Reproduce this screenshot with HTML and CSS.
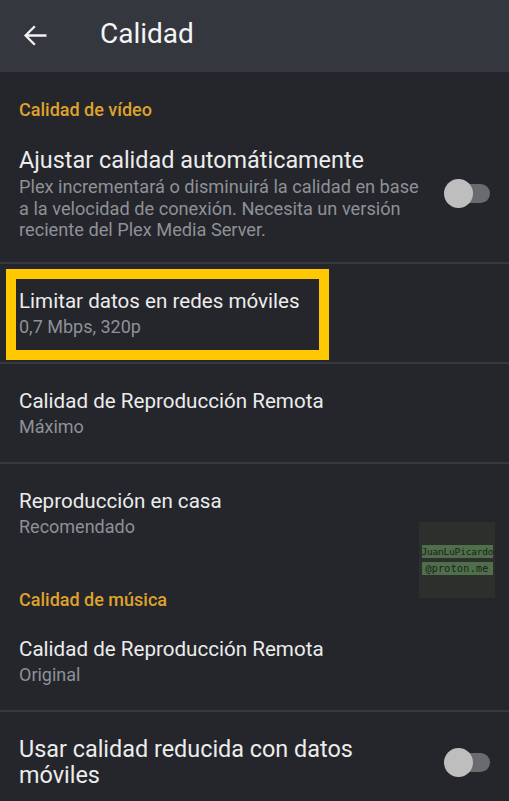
FILE: index.html
```html
<!DOCTYPE html>
<html lang="es">
<head>
<meta charset="utf-8">
<title>Calidad</title>
<link rel="stylesheet" href="styles.css">
</head>
<body>
<header class="appbar">
  <span class="back">
    <svg width="33" height="33" viewBox="0 0 24 24"><path d="M20 12H5.2M11.5 5.3L4.8 12l6.7 6.7" fill="none" stroke="#f2f2f2" stroke-width="1.7"/></svg>
  </span>
  <h1 class="title">Calidad</h1>
</header>
<main class="list">
  <div class="section">Calidad de vídeo</div>
  <div class="item item-toggle first">
    <div class="text">
      <div class="item-title big">Ajustar calidad automáticamente</div>
      <div class="desc">Plex incrementará o disminuirá la calidad en base a la velocidad de conexión. Necesita un versión reciente del Plex Media Server.</div>
    </div>
    <div class="switch"><span class="knob"></span></div>
  </div>
  <div class="item highlight-wrap">
    <div class="highlight"></div>
    <div class="text">
      <div class="item-title">Limitar datos en redes móviles</div>
      <div class="sub">0,7 Mbps, 320p</div>
    </div>
  </div>
  <div class="item">
    <div class="text">
      <div class="item-title">Calidad de Reproducción Remota</div>
      <div class="sub">Máximo</div>
    </div>
  </div>
  <div class="item noline">
    <div class="text">
      <div class="item-title">Reproducción en casa</div>
      <div class="sub">Recomendado</div>
    </div>
  </div>
  <div class="section">Calidad de música</div>
  <div class="item">
    <div class="text">
      <div class="item-title">Calidad de Reproducción Remota</div>
      <div class="sub">Original</div>
    </div>
  </div>
  <div class="item item-toggle noline">
    <div class="text narrow">
      <div class="item-title big">Usar calidad reducida con datos móviles</div>
    </div>
    <div class="switch"><span class="knob"></span></div>
  </div>
  <div class="watermark">
    <span class="wm-label">JuanLuPicardo</span>
    <span class="wm-label wide">@proton.me</span>
  </div>
</main>
</body>
</html>
```
FILE: styles.css
```css
html, body {
  margin: 0;
  padding: 0;
}
body {
  background: #24262b;
  font-family: Roboto, "Noto Sans", "Liberation Sans", sans-serif;
  color: #eeeeee;
  width: 509px;
  height: 801px;
  overflow: hidden;
}
.appbar {
  height: 72px;
  background: #34373e;
  display: flex;
  align-items: center;
  box-sizing: border-box;
  padding-left: 19px;
}
.back {
  display: flex;
  width: 33px;
  height: 33px;
  margin-top: -2px;
}
.title {
  margin: 0 0 0 48px;
  font-size: 28px;
  font-weight: 400;
  color: #f4f4f4;
  line-height: 32px;
  margin-top: -4px;
}
.list {
  position: relative;
}
.section {
  padding: 26px 19px 0;
  line-height: 24px;
  font-size: 18px;
  font-weight: 500;
  color: #dfa22b;
}
.item {
  display: flex;
  align-items: center;
  padding: 24px 19px 22px;
  border-bottom: 2px solid #35383d;
  position: relative;
}
.item.item-toggle {
  padding-bottom: 24px;
}
.item.noline {
  border-bottom: none;
}
.item.first {
  padding-top: 24px;
  padding-bottom: 21px;
}
.text {
  flex: 1;
  min-width: 0;
}
.narrow {
  padding-right: 40px;
}
.item-title {
  font-size: 20.6px;
  line-height: 26px;
  color: #ececec;
}
.item-title.big {
  font-size: 23.4px;
  line-height: 26px;
}
.first .item-title.big {
  line-height: 28px;
  margin-bottom: 2px;
}
.desc {
  font-size: 18.2px;
  line-height: 21.5px;
  color: #8e9197;
}
.sub {
  font-size: 18px;
  line-height: 26px;
  color: #8e9197;
}
.switch {
  position: relative;
  width: 46px;
  height: 28px;
  flex: none;
  margin-left: 14px;
}
.switch::before {
  content: "";
  position: absolute;
  left: 6px;
  right: 0;
  top: 5px;
  height: 19px;
  border-radius: 10px;
  background: #6a6b6e;
}
.knob {
  position: absolute;
  left: 0;
  top: 0;
  width: 29px;
  height: 29px;
  border-radius: 50%;
  background: #bebebe;
}
.highlight {
  position: absolute;
  left: 6px;
  top: 5px;
  width: 303px;
  height: 71px;
  border: 10px solid #ffc800;
}
.watermark {
  position: absolute;
  left: 419px;
  top: 450px;
  width: 76px;
  height: 76px;
  background: #2d2f2c;
  display: flex;
  flex-direction: column;
  align-items: center;
  justify-content: center;
  gap: 4px;
}
.wm-label {
  width: 71px;
  text-align: center;
  background: #4f6e4a;
  color: #1b1d1a;
  font-family: "DejaVu Sans Mono", "Liberation Mono", monospace;
  font-size: 9.5px;
  line-height: 13px;
  letter-spacing: -0.2px;
}
.wm-label.wide {
  font-size: 10px;
  letter-spacing: 0.3px;
}
```
